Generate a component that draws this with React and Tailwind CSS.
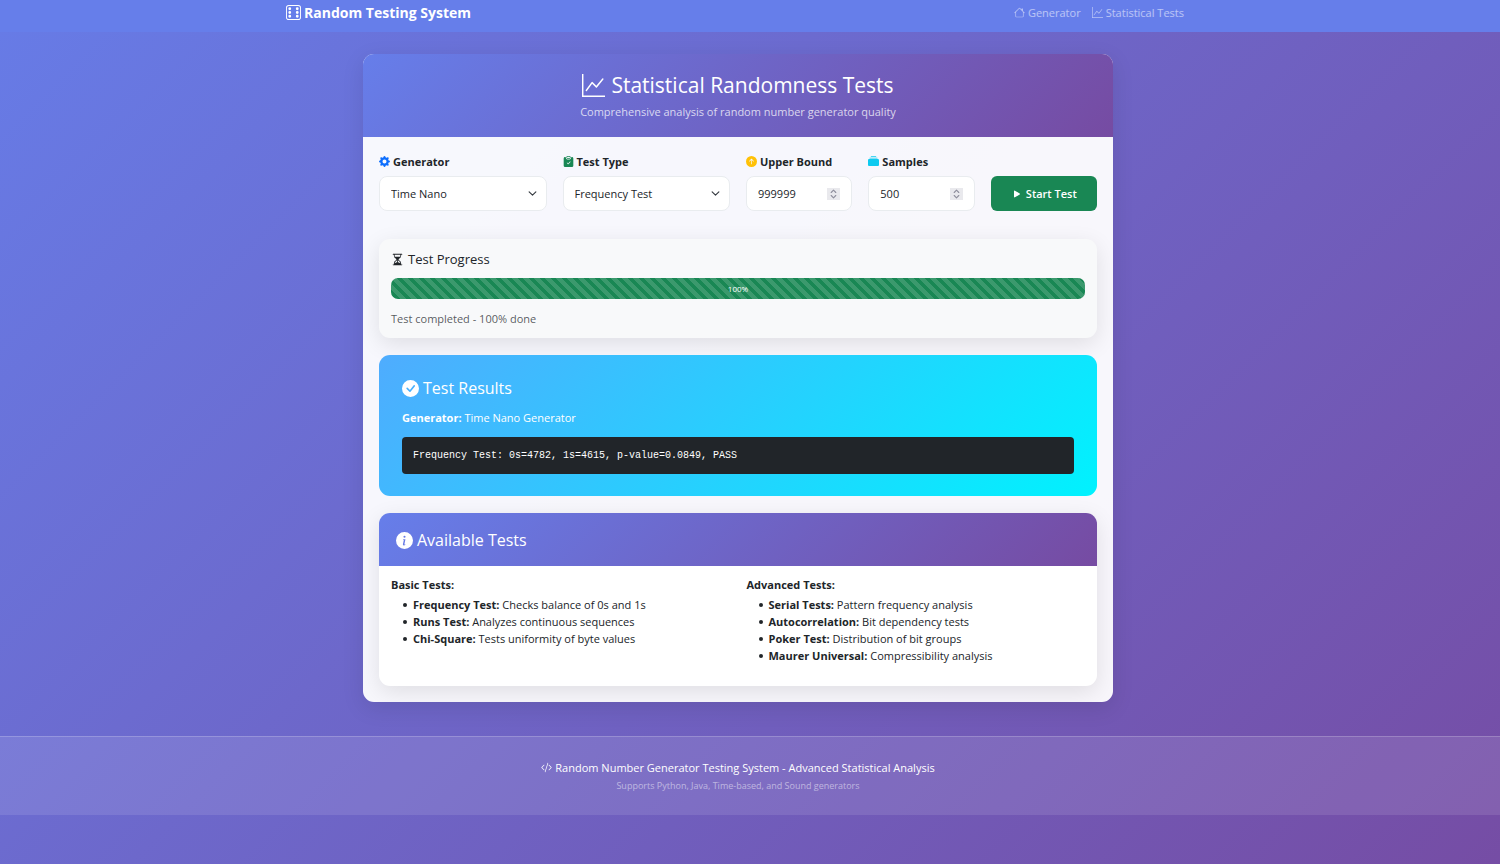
import {
  BsDice6, BsHouse, BsGraphUp, BsGearFill, BsClipboardCheckFill, BsArrowUpCircleFill,
  BsCollectionFill, BsPlayFill, BsHourglassSplit, BsCheckCircleFill, BsInfoCircleFill,
  BsCodeSlash,
} from "react-icons/bs";

const controlBox =
  "flex h-[35px] items-center rounded-lg border border-[#e9ecef] bg-white text-[11px] text-[#212529]";

function FieldLabel({ htmlFor, icon, children }) {
  return (
    <label htmlFor={htmlFor} className="mb-1.5 flex h-[17px] items-center gap-[3px] text-[11px] font-bold">
      {icon}
      {children}
    </label>
  );
}

function SelectField({ id, label, icon, options }) {
  return (
    <div className="col-span-3">
      <FieldLabel htmlFor={id} icon={icon}>{label}</FieldLabel>
      <div className="relative">
        <select id={id} className={`${controlBox} w-full appearance-none pr-8 pl-[11px]`}>
          {options.map((option) => (
            <option key={option}>{option}</option>
          ))}
        </select>
        <svg viewBox="0 0 16 16" className="pointer-events-none absolute top-[13px] right-2.5 size-[9px]" fill="none" stroke="#343a40" strokeWidth="2" strokeLinecap="round" strokeLinejoin="round" aria-hidden="true">
          <path d="m2 5 6 6 6-6" />
        </svg>
      </div>
    </div>
  );
}

function NumberField({ id, label, icon, value }) {
  return (
    <div className="col-span-2">
      <FieldLabel htmlFor={id} icon={icon}>{label}</FieldLabel>
      <div className={`${controlBox} pr-[11px] pl-[11px]`}>
        <input
          id={id}
          type="number"
          defaultValue={value}
          className="min-w-0 flex-1 bg-transparent outline-none [appearance:textfield] [&::-webkit-inner-spin-button]:appearance-none"
        />
        <svg viewBox="0 0 13 12" className="h-3 w-[13px] bg-[#e9e9ed]" fill="none" stroke="#8f8f9d" strokeWidth="1.1" strokeLinecap="round" strokeLinejoin="round" aria-hidden="true">
          <path d="M4.2 4.5 6.5 2.2l2.3 2.3M4.2 7.5l2.3 2.3 2.3-2.3" />
        </svg>
      </div>
    </div>
  );
}

function TestList({ title, items }) {
  return (
    <div>
      <h3 className="mb-[3px] text-[11px] leading-[17px] font-bold">{title}</h3>
      <ul className="pl-[22px]">
        {items.map(([name, text]) => (
          <li
            key={name}
            className="relative text-[11px] leading-[17px] before:absolute before:top-[7px] before:-left-2.5 before:size-1 before:rounded-full before:bg-[#212529]"
          >
            <strong>{name}:</strong> {text}
          </li>
        ))}
      </ul>
    </div>
  );
}

export default function App() {
  return (
    <div className="min-h-screen bg-[linear-gradient(135deg,#667eea_-5%,#764ba2_104%)] font-['Open_Sans','Noto_Sans',sans-serif] text-[11px] leading-[17px] text-[#212529]">
      <nav className="bg-[#667eea] pr-6">
        <div className="mx-auto flex h-8 max-w-[924px] items-start justify-between px-2.5 pt-1">
          <a href="#home" className="flex items-center gap-[3px] text-[14px] font-bold text-white">
            <BsDice6 className="size-[15px]" />
            Random Testing System
          </a>
          <div className="flex gap-[11px] pr-1.5 text-white/55">
            <a href="#generator" className="flex items-center gap-[3px]">
              <BsHouse className="size-[11px]" />
              Generator
            </a>
            <a href="#tests" className="flex items-center gap-[3px]">
              <BsGraphUp className="size-[11px]" />
              Statistical Tests
            </a>
          </div>
        </div>
      </nav>

      <main className="pt-[22px] pr-6 pb-[34px]">
        <section className="mx-auto max-w-[750px] overflow-hidden rounded-[11px] bg-white/95 shadow-[0_6px_22px_rgba(0,0,0,0.1)]">
          <header className="bg-[linear-gradient(135deg,#667eea,#764ba2)] px-4 py-[17px] text-center text-white">
            <h1 className="mb-[5px] flex items-center justify-center gap-1.5 text-[21px] leading-7">
              <BsGraphUp className="size-[23px]" />
              Statistical Randomness Tests
            </h1>
            <p className="leading-4 text-white/75">Comprehensive analysis of random number generator quality</p>
          </header>

          <div className="p-4">
            <form className="grid grid-cols-12 gap-4" onSubmit={(e) => e.preventDefault()}>
              <SelectField id="generator" label="Generator" icon={<BsGearFill className="size-[11px] text-[#0d6efd]" />} options={["Time Nano", "Python", "Java", "Sound"]} />
              <SelectField id="test-type" label="Test Type" icon={<BsClipboardCheckFill className="size-[11px] text-[#198754]" />} options={["Frequency Test", "Runs Test", "Chi-Square"]} />
              <NumberField id="upper" label="Upper Bound" icon={<BsArrowUpCircleFill className="size-[11px] text-[#ffc107]" />} value={999999} />
              <NumberField id="samples" label="Samples" icon={<BsCollectionFill className="size-[11px] text-[#0dcaf0]" />} value={500} />
              <button type="submit" className="col-span-2 flex h-[35px] items-center justify-center gap-[3px] self-end rounded-md bg-[#198754] font-semibold text-white">
                <BsPlayFill className="size-[12px]" />
                Start Test
              </button>
            </form>

            <section className="mt-7 rounded-[11px] bg-[#f8f9fa] px-3 pt-3 pb-[11px] shadow-[0_6px_22px_rgba(0,0,0,0.1)]">
              <h2 className="mb-2.5 flex items-center gap-1 text-[13px]">
                <BsHourglassSplit className="size-[13px]" />
                Test Progress
              </h2>
              <div
                role="progressbar"
                aria-valuenow={100}
                aria-valuemin={0}
                aria-valuemax={100}
                aria-label="Test Progress"
                className="flex h-[21px] items-center justify-center rounded-[7px] bg-[#198754] bg-[linear-gradient(45deg,rgba(255,255,255,.15)_25%,transparent_25%,transparent_50%,rgba(255,255,255,.15)_50%,rgba(255,255,255,.15)_75%,transparent_75%,transparent)] bg-size-[11px_11px] text-[8px] text-white"
              >
                100%
              </div>
              <p className="mt-[11px] text-[#212529]/75">Test completed - 100% done</p>
            </section>

            <section className="mt-[17px] rounded-[11px] bg-[linear-gradient(135deg,#4facfe,#00f2fe)] px-[23px] py-[22px] text-white">
              <h2 className="mb-2.5 flex items-center gap-1 text-[16px] leading-[22px]">
                <BsCheckCircleFill className="size-[17px]" />
                Test Results
              </h2>
              <p className="mb-[11px]"><strong>Generator:</strong> Time Nano Generator</p>
              <pre className="overflow-x-auto rounded bg-[#212529] px-[11px] py-2.5 font-['Liberation_Mono',monospace] text-[10px] leading-[17px]">
                Frequency Test: 0s=4782, 1s=4615, p-value=0.0849, PASS
              </pre>
            </section>

            <section className="mt-[17px] overflow-hidden rounded-[11px] bg-white shadow-[0_6px_22px_rgba(0,0,0,0.1)]">
              <header className="bg-[linear-gradient(135deg,#667eea,#764ba2)] px-[17px] pt-[17px] pb-[15px] text-white">
                <h2 className="flex items-center gap-1 text-[16px] leading-[21px]">
                  <BsInfoCircleFill className="size-[17px]" />
                  Available Tests
                </h2>
              </header>
              <div className="grid grid-cols-2 gap-[17px] px-3 pt-2.5 pb-[22px]">
                <TestList
                  title="Basic Tests:"
                  items={[
                    ["Frequency Test", "Checks balance of 0s and 1s"],
                    ["Runs Test", "Analyzes continuous sequences"],
                    ["Chi-Square", "Tests uniformity of byte values"],
                  ]}
                />
                <TestList
                  title="Advanced Tests:"
                  items={[
                    ["Serial Tests", "Pattern frequency analysis"],
                    ["Autocorrelation", "Bit dependency tests"],
                    ["Poker Test", "Distribution of bit groups"],
                    ["Maurer Universal", "Compressibility analysis"],
                  ]}
                />
              </div>
            </section>
          </div>
        </section>
      </main>

      <footer className="border-t border-white/20 bg-white/10 pt-[22px] pr-6 pb-[21px] text-center text-white">
        <p className="mb-px flex items-center justify-center gap-[3px]">
          <BsCodeSlash className="size-[11px]" />
          Random Number Generator Testing System - Advanced Statistical Analysis
        </p>
        <p className="text-[9px] text-white/50">Supports Python, Java, Time-based, and Sound generators</p>
      </footer>
    </div>
  );
}
